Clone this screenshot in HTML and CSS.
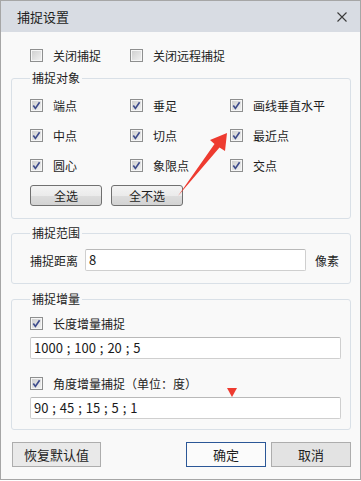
FILE: index.html
```html
<!DOCTYPE html>
<html lang="zh-CN">
<head>
    <meta charset="UTF-8">
    <meta name="viewport" content="width=device-width, initial-scale=1.0">
    <title>捕捉设置</title>
    <link rel="stylesheet" href="styles.css">
</head>
<body>
    <div class="window">
        <div class="titlebar">
            <span class="title">捕捉设置</span>
            <svg class="close" width="10" height="10" viewBox="0 0 10 10">
                <path d="M0.5 0.5 L9.5 9.5 M9.5 0.5 L0.5 9.5" stroke="#3a3a3a" stroke-width="1.1" fill="none"/>
            </svg>
        </div>

        <div class="content">
            <div class="toprow">
                <label class="opt"><span class="cb"></span>关闭捕捉</label>
                <label class="opt"><span class="cb"></span>关闭远程捕捉</label>
            </div>

            <fieldset class="group g1">
                <legend>捕捉对象</legend>
                <div class="grid">
                    <label class="opt"><span class="cb on"><svg viewBox="0 0 11 11"><path d="M2.3 5.6 L4.4 8.4 L8.6 2.2"/></svg></span>端点</label>
                    <label class="opt"><span class="cb on"><svg viewBox="0 0 11 11"><path d="M2.3 5.6 L4.4 8.4 L8.6 2.2"/></svg></span>垂足</label>
                    <label class="opt"><span class="cb on"><svg viewBox="0 0 11 11"><path d="M2.3 5.6 L4.4 8.4 L8.6 2.2"/></svg></span>画线垂直水平</label>
                    <label class="opt"><span class="cb on"><svg viewBox="0 0 11 11"><path d="M2.3 5.6 L4.4 8.4 L8.6 2.2"/></svg></span>中点</label>
                    <label class="opt"><span class="cb on"><svg viewBox="0 0 11 11"><path d="M2.3 5.6 L4.4 8.4 L8.6 2.2"/></svg></span>切点</label>
                    <label class="opt"><span class="cb on"><svg viewBox="0 0 11 11"><path d="M2.3 5.6 L4.4 8.4 L8.6 2.2"/></svg></span>最近点</label>
                    <label class="opt"><span class="cb on"><svg viewBox="0 0 11 11"><path d="M2.3 5.6 L4.4 8.4 L8.6 2.2"/></svg></span>圆心</label>
                    <label class="opt"><span class="cb on"><svg viewBox="0 0 11 11"><path d="M2.3 5.6 L4.4 8.4 L8.6 2.2"/></svg></span>象限点</label>
                    <label class="opt"><span class="cb on"><svg viewBox="0 0 11 11"><path d="M2.3 5.6 L4.4 8.4 L8.6 2.2"/></svg></span>交点</label>
                </div>
                <div class="btnrow">
                    <button class="btn">全选</button>
                    <button class="btn">全不选</button>
                </div>
            </fieldset>

            <fieldset class="group g2">
                <legend>捕捉范围</legend>
                <div class="range">
                    <span class="rlabel">捕捉距离</span>
                    <div class="field short">8</div>
                    <span class="unit">像素</span>
                </div>
            </fieldset>

            <fieldset class="group g3">
                <legend>捕捉增量</legend>
                <label class="opt first"><span class="cb on"><svg viewBox="0 0 11 11"><path d="M2.3 5.6 L4.4 8.4 L8.6 2.2"/></svg></span>长度增量捕捉</label>
                <div class="field wide">1000 ; 100 ; 20 ; 5</div>
                <label class="opt second"><span class="cb on"><svg viewBox="0 0 11 11"><path d="M2.3 5.6 L4.4 8.4 L8.6 2.2"/></svg></span>角度增量捕捉（单位：度）</label>
                <div class="field wide">90 ; 45 ; 15 ; 5 ; 1</div>
            </fieldset>

            <div class="footer">
                <button class="fbtn">恢复默认值</button>
                <div class="fright">
                    <button class="fbtn ok">确定</button>
                    <button class="fbtn cancel">取消</button>
                </div>
            </div>
        </div>

        <!-- red annotations drawn over the screenshot -->
        <svg class="marks" width="361" height="481" viewBox="0 0 361 481">
            <polygon points="227,133 210,140 214.5,144 178,196 219.5,147.5 225,151" fill="#ee3b30"/>
            <polygon points="227,388 237,388 232,397" fill="#ee3b30"/>
        </svg>
    </div>
</body>
</html>
```

FILE: styles.css
```css
body {
    margin: 0;
    background-color: #ffffff;
    font-family: "Noto Sans CJK SC", "Noto Sans", sans-serif;
    font-size: 12px;
    color: #1e1e1e;
}

.window {
    position: relative;
    width: 359px;
    height: 478px;
    border: 1px solid #a6a6a6;
    background-color: #f9f9f9;
}

.titlebar {
    height: 31px;
    background-color: #d8dce3;
    display: flex;
    align-items: center;
    justify-content: space-between;
    padding: 0 13px 0 16px;
}

.title {
    font-size: 13px;
    line-height: 16px;
}

.content {
    padding: 0 9px 0 10px;
}

.toprow {
    display: flex;
    height: 13px;
    margin-top: 17px;
    padding-left: 19px;
}

.toprow .opt {
    width: 100px;
}

.opt {
    display: flex;
    align-items: center;
    gap: 10px;
    height: 13px;
    line-height: 13px;
    white-space: nowrap;
}

.cb {
    box-sizing: border-box;
    width: 13px;
    height: 13px;
    flex: none;
    border: 1px solid #8e8f8f;
    background: linear-gradient(135deg, #cdcdcd, #f3f3f3);
    box-shadow: inset 0 0 0 1px #f6f6f6;
}

.cb svg {
    display: block;
    width: 11px;
    height: 11px;
}

.cb svg path {
    fill: none;
    stroke: #3e4c8c;
    stroke-width: 1.7;
}

.group {
    margin: 0;
    border: 1px solid #d9e0e7;
    border-radius: 3px;
    min-width: 0;
}

.group legend {
    padding: 0 2px;
    line-height: 16px;
    font-size: 12px;
}

.g1 {
    margin-top: 8px;
    padding: 4px 9px 12px 18px;
}

.grid {
    display: grid;
    grid-template-columns: 100px 100px 100px;
    grid-auto-rows: 30px;
    align-items: center;
}

.btnrow {
    display: flex;
    gap: 9px;
    margin-top: 5px;
}

.btn {
    width: 72px;
    height: 21px;
    padding: 0;
    border: 1px solid #707070;
    border-radius: 3px;
    background: linear-gradient(#f3f3f3, #ebebeb 50%, #dddddd 51%, #d3d3d3);
    font-family: inherit;
    font-size: 12px;
    color: #1e1e1e;
}

.g2 {
    margin-top: 6px;
    padding: 8px 9px 12px 18px;
}

.range {
    display: flex;
    align-items: center;
}

.rlabel {
    width: 55px;
}

.unit {
    margin-left: 9px;
}

.field {
    box-sizing: border-box;
    height: 22px;
    border: 1px solid #cfcfcf;
    border-top-color: #b9b9b9;
    border-radius: 2px;
    background-color: #ffffff;
    padding-left: 3px;
    font-size: 13px;
    line-height: 20px;
    word-spacing: 1px;
    color: #1a1a1a;
}

.short {
    width: 221px;
}

.wide {
    width: 311px;
    margin-top: 7px;
}

.g3 {
    margin-top: 7px;
    padding: 10px 9px 10px 18px;
}

.second {
    margin-top: 18px;
}

.footer {
    display: flex;
    justify-content: space-between;
    margin-top: 12px;
    padding-left: 1px;
}

.fright {
    display: flex;
    gap: 5px;
}

.fbtn {
    width: 89px;
    height: 25px;
    padding: 0;
    border: 1px solid #adadad;
    background-color: #e9e9e9;
    font-family: inherit;
    font-size: 13px;
    color: #1e1e1e;
}

.ok {
    width: 80px;
    border-color: #2b5797;
    background-color: #fbfbfb;
}

.cancel {
    width: 80px;
    background-color: #e3e3e3;
}

.marks {
    position: absolute;
    left: -1px;
    top: -1px;
    pointer-events: none;
}
```
